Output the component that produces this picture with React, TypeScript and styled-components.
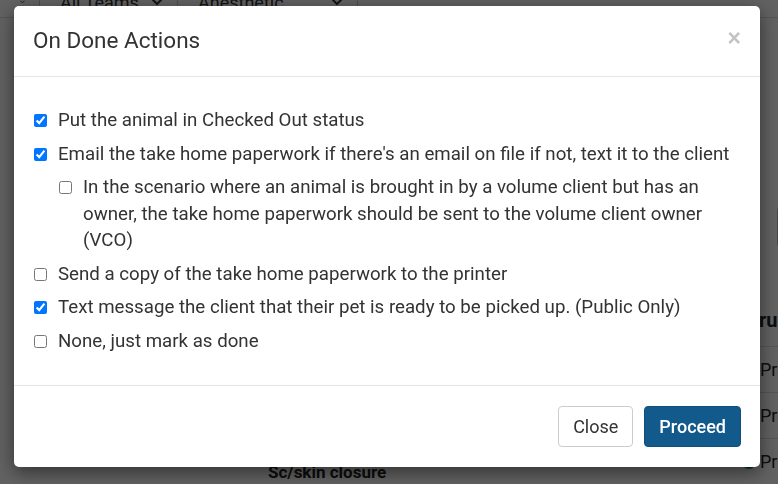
import React, { useState } from 'react';
import styled, { createGlobalStyle } from 'styled-components';

const GlobalStyle = createGlobalStyle`
	html, body {
		margin: 0;
		padding: 0;
		width: 778px;
		height: 484px;
		overflow: hidden;
		font-family: Roboto, "Liberation Sans", Arial, sans-serif;
		background: #fff;
	}
	* { box-sizing: border-box; }
`;

const Page = styled.div`
	width: 778px;
	height: 484px;
	display: grid;
	grid-template-rows: 18px minmax(0, 1fr);
	background: #fff;
	color: #212529;
	overflow: hidden;
`;
const FilterBar = styled.div`
	display: flex;
	align-items: flex-end;
	overflow: hidden;
	border-bottom: 1px solid #ddd;
`;
const FakeSelect = styled.div<{ $w: number }>`
	width: ${p => p.$w}px;
	height: 30px;
	flex: none;
	display: flex;
	align-items: center;
	justify-content: space-between;
	padding: 0 14px 0 20px;
	border-right: 1px solid #ccc;
	font-size: 18px;
	color: #333;
`;
const PageBody = styled.div`
	display: grid;
	grid-template-columns: 250px 1fr 36px;
	min-height: 0;
	overflow: hidden;
`;
const LeftCol = styled.div`
	padding-top: 160px;
	font-size: 18px;
	color: #1a7a8a;
	margin-left: -12px;
`;
const MainCol = styled.div`
	display: flex;
	flex-direction: column;
	justify-content: flex-end;
	padding-bottom: 2px;
`;
const Procedure = styled.div`
	font-weight: 700;
	font-size: 17px;
	color: #222;
	margin-left: 18px;
`;
const RightCol = styled.div`
	padding-top: 188px;
	display: flex;
	flex-direction: column;
	white-space: nowrap;
	min-height: 0;
`;
const SideInput = styled.div`
	height: 42px;
	margin-left: 35px;
	width: 60px;
	flex: none;
	border: 1px solid #bbb;
	border-radius: 4px;
	margin-bottom: 60px;
`;
const SideTitle = styled.div`
	font-weight: 700;
	font-size: 20px;
	padding: 0 0 14px 4px;
	border-bottom: 1px solid #ddd;
`;
const SideRow = styled.div`
	display: flex;
	align-items: center;
	gap: 4px;
	height: 46px;
	flex: none;
	font-size: 18px;
	border-bottom: 1px solid #ddd;
`;
const Dot = styled.span<{ $on?: boolean }>`
	width: 14px;
	height: 14px;
	flex: none;
	border-radius: 50%;
	background: ${p => (p.$on ? '#1e8a3a' : 'transparent')};
`;

const Backdrop = styled.div`
	position: fixed;
	inset: 0;
	background: rgba(0, 0, 0, 0.62);
`;
const Dialog = styled.div`
	position: fixed;
	left: 14px;
	top: 6px;
	width: 746px;
	background: #fff;
	border-radius: 5px;
	box-shadow: 0 5px 18px rgba(0, 0, 0, 0.5);
	display: flex;
	flex-direction: column;
`;
const Header = styled.div`
	height: 71px;
	display: flex;
	align-items: center;
	justify-content: space-between;
	padding: 0 19px 0 19px;
	border-bottom: 1px solid #e5e5e5;
`;
const Title = styled.h4`
	margin: 0;
	font-size: 22.5px;
	font-weight: 400;
	color: #333;
	padding-bottom: 2px;
`;
const CloseX = styled.button`
	border: none;
	background: none;
	padding: 0;
	font-size: 23px;
	font-weight: 700;
	line-height: 1;
	color: #c4c4c4;
	cursor: pointer;
	margin-bottom: 6px;
	font-family: "Liberation Sans", Arial, sans-serif;
`;
const Body = styled.div`
	height: 309px;
	padding: 30px 20px 0 20px;
	display: flex;
	flex-direction: column;
	gap: 7px;
	border-bottom: 1px solid #e5e5e5;
`;
const Option = styled.label<{ $nested?: boolean }>`
	display: flex;
	align-items: flex-start;
	gap: 11px;
	padding-left: ${p => (p.$nested ? 25 : 0)}px;
	font-size: 18.7px;
	line-height: 26.5px;
	color: #333;
	cursor: pointer;
	input {
		flex: none;
		width: 13px;
		height: 13px;
		margin: 7px 0 0 0;
	}
`;
const Footer = styled.div`
	height: 81px;
	display: flex;
	align-items: center;
	justify-content: flex-end;
	gap: 11px;
	padding: 0 19px 0 0;
`;
const Button = styled.button<{ $primary?: boolean }>`
	height: 41px;
	padding: 0 14px;
	border-radius: 4px;
	font-family: Roboto, "Liberation Sans", Arial, sans-serif;
	font-size: 18px;
	cursor: pointer;
	border: 1px solid ${p => (p.$primary ? '#0f4f7a' : '#ccc')};
	background: ${p => (p.$primary ? '#125a8c' : '#fff')};
	color: ${p => (p.$primary ? '#fff' : '#333')};
	font-weight: ${p => (p.$primary ? 500 : 400)};
`;

const options = [
	{ id: 'checkout', text: 'Put the animal in Checked Out status', checked: true },
	{ id: 'email', text: "Email the take home paperwork if there's an email on file if not, text it to the client", checked: true },
	{ id: 'vco', text: 'In the scenario where an animal is brought in by a volume client but has an owner, the take home paperwork should be sent to the volume client owner (VCO)', checked: false, nested: true },
	{ id: 'print', text: 'Send a copy of the take home paperwork to the printer', checked: false },
	{ id: 'sms', text: 'Text message the client that their pet is ready to be picked up. (Public Only)', checked: true },
	{ id: 'none', text: 'None, just mark as done', checked: false },
];

const Chevron = () => (
	<svg width="12" height="8" viewBox="0 0 12 8">
		<path d="M1 1l5 5 5-5" stroke="#333" strokeWidth="2" fill="none" />
	</svg>
);

const App = () => {
	const [checked, setChecked] = useState<Record<string, boolean>>(
		Object.fromEntries(options.map(o => [o.id, o.checked]))
	);

	return (
		<>
			<GlobalStyle />
			<Page>
				<FilterBar>
					<FakeSelect $w={40}><span /><Chevron /></FakeSelect>
					<FakeSelect $w={138}><span>All Teams</span><Chevron /></FakeSelect>
					<FakeSelect $w={180}><span>Anesthetic</span><Chevron /></FakeSelect>
				</FilterBar>
				<PageBody>
					<LeftCol>n</LeftCol>
					<MainCol>
						<Procedure>Sc/skin closure</Procedure>
					</MainCol>
					<RightCol>
						<SideInput />
						<SideTitle>Drug</SideTitle>
						<SideRow><Dot />Pre</SideRow>
						<SideRow><Dot />Pre</SideRow>
						<SideRow><Dot $on />Pre</SideRow>
					</RightCol>
				</PageBody>
			</Page>
			<Backdrop />
			<Dialog>
				<Header>
					<Title>On Done Actions</Title>
					<CloseX>×</CloseX>
				</Header>
				<Body>
					{options.map(o => (
						<Option key={o.id} $nested={o.nested}>
							<input
								type="checkbox"
								checked={checked[o.id]}
								onChange={() => setChecked({ ...checked, [o.id]: !checked[o.id] })}
							/>
							<span>{o.text}</span>
						</Option>
					))}
				</Body>
				<Footer>
					<Button>Close</Button>
					<Button $primary>Proceed</Button>
				</Footer>
			</Dialog>
		</>
	);
};

export default App;
